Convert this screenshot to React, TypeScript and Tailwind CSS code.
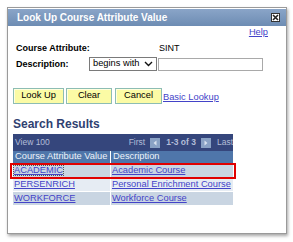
import React from "react";

const linkCls = "text-[#4343c8] underline";

function NavIcon({ dir }: { dir: "left" | "right" }) {
  return (
    <span className="inline-flex h-[10px] w-[10px] items-center justify-center bg-[#8aa2c5]">
      <svg width="6" height="6" viewBox="0 0 6 6">
        {dir === "left" ? (
          <polygon points="4.5,0.5 4.5,5.5 1.5,3" fill="#d9e2ef" />
        ) : (
          <polygon points="1.5,0.5 1.5,5.5 4.5,3" fill="#d9e2ef" />
        )}
      </svg>
    </span>
  );
}

function Btn({ label, w }: { label: string; w: string }) {
  return (
    <button
      className={`${w} h-[16px] border border-[#8dbdb3] bg-[#fbfba5] text-[9.3px] leading-none text-black shadow-[inset_1px_1px_0_#ffffe0]`}
    >
      {label}
    </button>
  );
}

export default function App() {
  const rows = [
    { v: "ACADEMIC", d: "Academic Course", bg: "bg-[#c9d5e2]", focus: true },
    { v: "PERSENRICH", d: "Personal Enrichment Course", bg: "bg-[#e6ecf3]", focus: false },
    { v: "WORKFORCE", d: "Workforce Course", bg: "bg-[#c9d5e2]", focus: false },
  ];
  return (
    <div className="relative h-[242px] w-[293px] overflow-hidden bg-white pl-[7px] pt-[7px] font-['Liberation_Sans',Arial,sans-serif]">
      <div className="h-[227px] w-[280px] border border-[#9a9a9a] bg-white pt-[1px] shadow-[1px_2px_3px_rgba(0,0,0,0.35)]">
        {/* title bar */}
        <div className="flex h-[17px] items-center justify-between bg-gradient-to-b from-[#8aa5c8] to-[#6d8cb3] pl-[9px] pr-[6px]">
          <span className="text-[10px] font-bold leading-none text-white">
            Look Up Course Attribute Value
          </span>
          <span className="flex h-[9px] w-[9px] items-center justify-center border border-[#333] bg-white">
            <svg width="7" height="7" viewBox="0 0 7 7">
              <path d="M1 1 L6 6 M6 1 L1 6" stroke="#222" strokeWidth="1.6" />
            </svg>
          </span>
        </div>

        {/* help */}
        <div className="mt-[2px] flex h-[10px] items-center justify-end pr-[18px]">
          <span className={`${linkCls} text-[9.3px] leading-none`}>Help</span>
        </div>

        {/* form */}
        <div className="mt-[5px] flex h-[10px] items-center pl-[8px] text-[9px] leading-none text-black">
          <span className="w-[143px] font-bold">Course Attribute:</span>
          <span>SINT</span>
        </div>
        <div className="mt-[4px] flex h-[14px] items-center pl-[8px] text-[9px] leading-none text-black">
          <span className="w-[73px] font-bold">Description:</span>
          <div className="flex h-[14px] w-[68px] items-center justify-between border border-[#7a7a7a] bg-white pl-[3px] pr-[3px] text-[9.3px]">
            <span>begins with</span>
            <svg width="9" height="6" viewBox="0 0 9 6">
              <path d="M1 1 L4.5 4.5 L8 1" stroke="#111" strokeWidth="1.4" fill="none" />
            </svg>
          </div>
          <div className="ml-[1px] h-[13px] w-[105px] border border-[#a9a9a9] bg-white" />
        </div>

        {/* buttons */}
        <div className="mt-[17px] flex items-center pl-[5px]">
          <Btn label="Look Up" w="w-[51px]" />
          <div className="w-[2px]" />
          <Btn label="Clear" w="w-[46px]" />
          <div className="w-[3px]" />
          <Btn label="Cancel" w="w-[47px]" />
          <span className={`${linkCls} ml-[1px] mt-[4px] text-[9.3px] leading-none`}>Basic Lookup</span>
        </div>

        {/* search results */}
        <div className="mt-[13px] pl-[5px] text-[12px] font-bold leading-[14px] text-[#2f4171]">
          Search Results
        </div>

        <div className="relative ml-[5px] mt-[3px] w-[220px]">
          {/* nav bar */}
          <div className="flex h-[17px] items-center overflow-hidden whitespace-nowrap bg-[#35467c] pl-[2px] text-[8.5px] leading-none text-[#b3bdd8]">
            <span className="w-[118px]">View 100</span>
            <span>First</span>
            <span className="ml-[5px] flex">
              <NavIcon dir="left" />
            </span>
            <span className="ml-[6px] font-bold">1-3 of 3</span>
            <span className="ml-[5px] flex">
              <NavIcon dir="right" />
            </span>
            <span className="ml-[6px]">Last</span>
          </div>
          {/* header */}
          <div className="flex h-[12px] gap-[1px] bg-white">
            <div className="flex w-[97px] items-center bg-[#4f76aa] pl-[2px] text-[9.3px] leading-none text-[#eef2f8] whitespace-nowrap overflow-hidden">
              Course Attribute Value
            </div>
            <div className="flex flex-1 items-center bg-[#4f76aa] pl-[2px] text-[9.3px] leading-none text-[#eef2f8]">
              Description
            </div>
          </div>
          {rows.map((r) => (
            <div key={r.v} className="mt-[1px] flex h-[13px] gap-[1px]">
              <div className={`flex w-[97px] items-center pl-[1px] ${r.bg}`}>
                <span
                  className={`${linkCls} text-[9.3px] leading-none ${
                    r.focus ? "outline outline-1 outline-dotted outline-[#555]" : ""
                  }`}
                >
                  {r.v}
                </span>
              </div>
              <div className={`flex flex-1 items-center pl-[1px] ${r.bg}`}>
                <span className={`${linkCls} text-[9.3px] leading-none whitespace-nowrap`}>{r.d}</span>
              </div>
            </div>
          ))}
          {/* red highlight */}
          <div className="absolute left-[-3px] top-[29px] h-[16px] w-[226px] border-2 border-[#e00000]" />
        </div>
      </div>
    </div>
  );
}
